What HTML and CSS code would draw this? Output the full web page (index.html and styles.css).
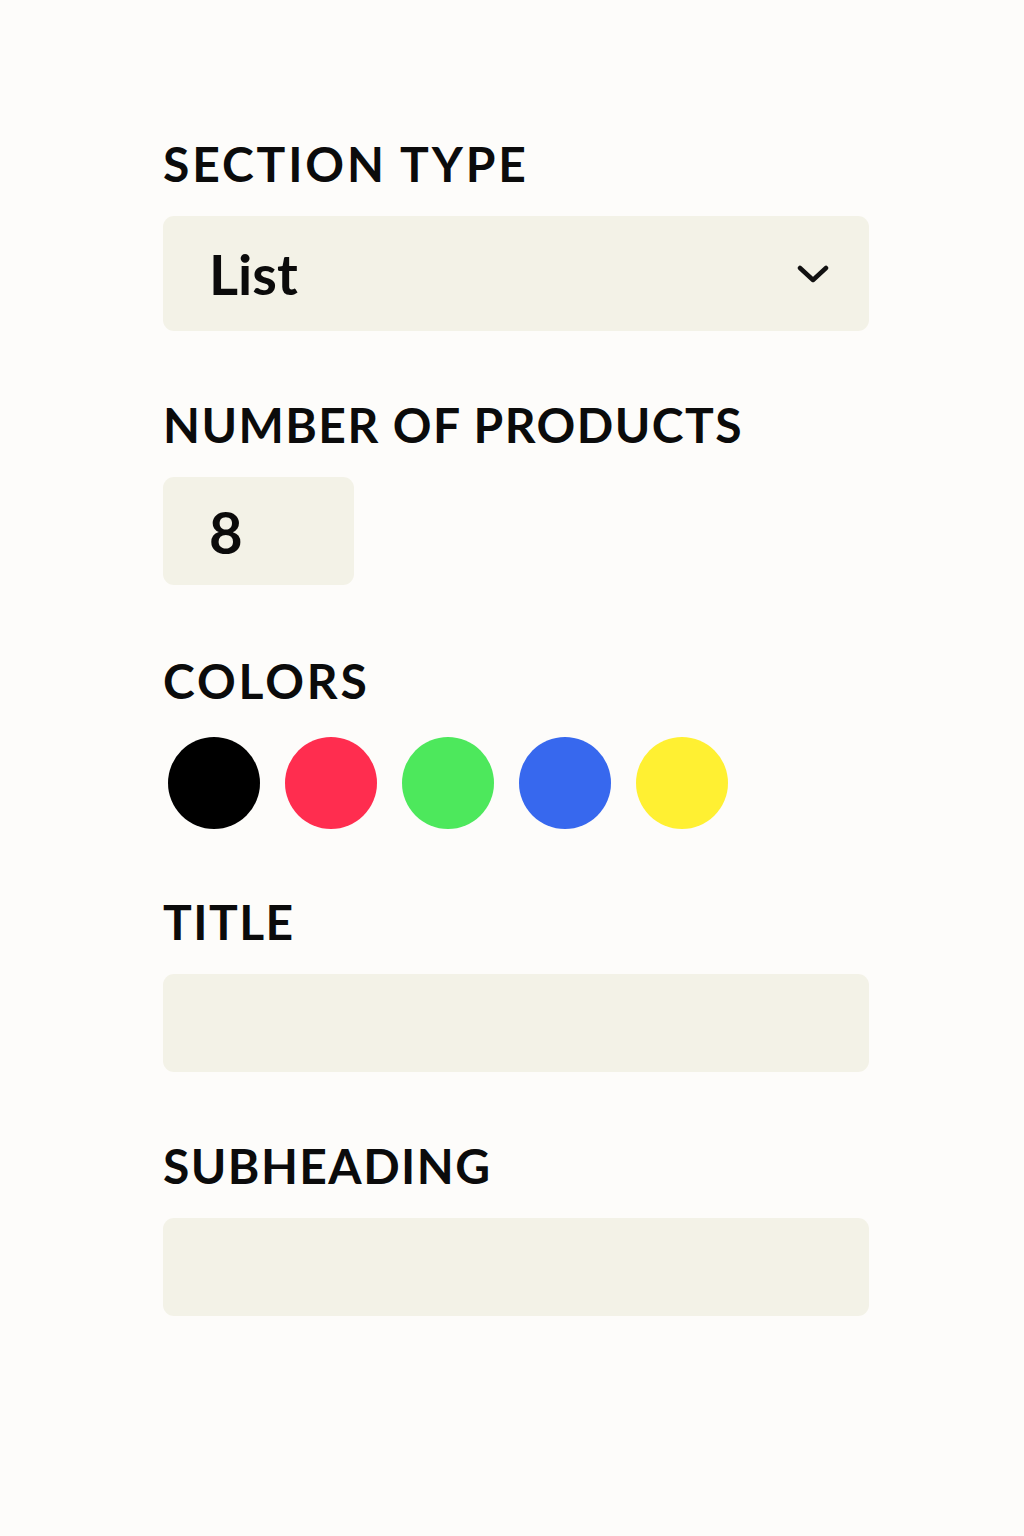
FILE: index.html
```html
<!DOCTYPE html>
<html lang="en">
<head>
<meta charset="utf-8">
<title>Section settings</title>
<link rel="stylesheet" href="styles.css">
</head>
<body>
<form class="form">
  <div class="field">
    <label class="label label-wide">SECTION TYPE</label>
    <div class="select">
      <span class="select-value">List</span>
      <svg class="chevron" width="32" height="20" viewBox="0 0 32 20"><polyline points="3,4 16,16 29,4" fill="none" stroke="#111" stroke-width="4.5" stroke-linecap="round" stroke-linejoin="round"/></svg>
    </div>
  </div>
  <div class="field">
    <label class="label">NUMBER OF PRODUCTS</label>
    <div class="number">8</div>
  </div>
  <div class="field">
    <label class="label label-wide">COLORS</label>
    <div class="swatches">
      <span class="swatch swatch-black"></span>
      <span class="swatch swatch-red"></span>
      <span class="swatch swatch-green"></span>
      <span class="swatch swatch-blue"></span>
      <span class="swatch swatch-yellow"></span>
    </div>
  </div>
  <div class="field">
    <label class="label">TITLE</label>
    <div class="text-input"></div>
  </div>
  <div class="field">
    <label class="label">SUBHEADING</label>
    <div class="text-input"></div>
  </div>
</form>
</body>
</html>
```
FILE: styles.css
```css
html, body {
  margin: 0;
  padding: 0;
  background: #fdfcfa;
  color: #0b0b0b;
  font-family: "Lato", "Noto Sans", sans-serif;
}
.form {
  display: flex;
  flex-direction: column;
  width: 706px;
  padding: 136px 0 0 163px;
}
.field {
  display: flex;
  flex-direction: column;
}
.label {
  font-size: 48px;
  font-weight: 700;
  letter-spacing: 0.03em;
  line-height: 56px;
  margin-bottom: 24px;
}
.label-wide {
  letter-spacing: 0.06em;
}
.select {
  height: 115px;
  background: #f3f2e7;
  border-radius: 11px;
  display: flex;
  align-items: center;
  justify-content: space-between;
  padding: 0 40px 0 46px;
  margin-bottom: 66px;
}
.select-value {
  font-size: 56px;
  font-weight: 700;
}
.chevron {
  display: block;
}
.number {
  width: 191px;
  height: 108px;
  background: #f3f2e7;
  border-radius: 11px;
  box-sizing: border-box;
  padding-left: 46px;
  display: flex;
  align-items: center;
  font-size: 58px;
  font-weight: 700;
  margin-bottom: 68px;
}
.swatches {
  display: flex;
  gap: 25px;
  padding-left: 5px;
  margin-top: 4px;
  margin-bottom: 65px;
}
.swatch {
  width: 92px;
  height: 92px;
  border-radius: 50%;
  display: block;
}
.swatch-black { background: #000; }
.swatch-red { background: #ff2d4f; }
.swatch-green { background: #4de85c; }
.swatch-blue { background: #3768ee; }
.swatch-yellow { background: #fff032; }
.text-input {
  height: 98px;
  background: #f3f2e7;
  border-radius: 11px;
  margin-bottom: 66px;
}
```
